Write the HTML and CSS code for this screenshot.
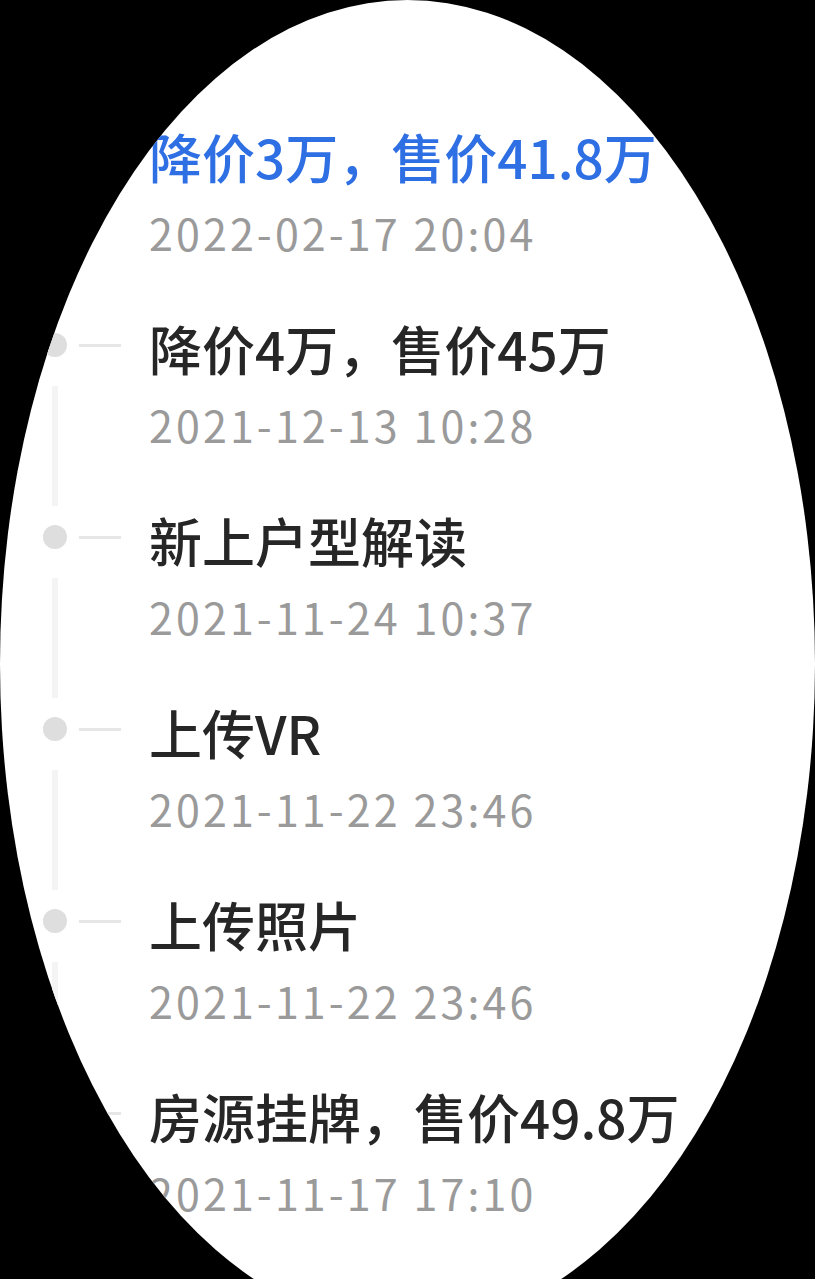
FILE: index.html
```html
<!DOCTYPE html>
<html lang="zh-CN">
<head>
<meta charset="utf-8">
<title>房源动态</title>
<link rel="stylesheet" href="styles.css">
</head>
<body>
<div class="screen">
  <ul class="timeline">
    <li class="item item-active">
      <div class="rail"><div class="head"><span class="dot"></span><span class="hline"></span></div><span class="vline"></span></div>
      <div class="content"><div class="title">降价3万，售价41.8万</div><div class="date">2022-02-17 20:04</div></div>
    </li>
    <li class="item">
      <div class="rail"><div class="head"><span class="dot"></span><span class="hline"></span></div><span class="vline"></span></div>
      <div class="content"><div class="title">降价4万，售价45万</div><div class="date">2021-12-13 10:28</div></div>
    </li>
    <li class="item">
      <div class="rail"><div class="head"><span class="dot"></span><span class="hline"></span></div><span class="vline"></span></div>
      <div class="content"><div class="title">新上户型解读</div><div class="date">2021-11-24 10:37</div></div>
    </li>
    <li class="item">
      <div class="rail"><div class="head"><span class="dot"></span><span class="hline"></span></div><span class="vline"></span></div>
      <div class="content"><div class="title">上传VR</div><div class="date">2021-11-22 23:46</div></div>
    </li>
    <li class="item">
      <div class="rail"><div class="head"><span class="dot"></span><span class="hline"></span></div><span class="vline"></span></div>
      <div class="content"><div class="title">上传照片</div><div class="date">2021-11-22 23:46</div></div>
    </li>
    <li class="item">
      <div class="rail"><div class="head"><span class="dot"></span><span class="hline"></span></div><span class="vline"></span></div>
      <div class="content"><div class="title">房源挂牌，售价49.8万</div><div class="date">2021-11-17 17:10</div></div>
    </li>
  </ul>
</div>
</body>
</html>
```

FILE: styles.css
```css
html, body {
  margin: 0;
  padding: 0;
  background: #000;
  height: 1279px;
  overflow: hidden;
}

.screen {
  width: 815px;
  height: 1328px;
  border-radius: 50%;
  background: #fff;
  overflow: hidden;
}

.timeline {
  list-style: none;
  margin: 0;
  padding: 123px 0 0 0;
}

.item {
  display: flex;
  height: 192px;
}

.rail {
  width: 149px;
  flex: none;
  display: flex;
  flex-direction: column;
}

.head {
  height: 60px;
  display: flex;
  align-items: center;
  padding-left: 43px;
}

.dot {
  width: 24px;
  height: 24px;
  border-radius: 50%;
  background: #dedede;
}

.hline {
  width: 42px;
  height: 3px;
  margin-left: 12px;
  background: #e6e6e6;
}

.vline {
  width: 6px;
  height: 120px;
  margin-top: 11px;
  margin-left: 52px;
  background: #f4f4f4;
}

.content {
  display: flex;
  flex-direction: column;
}

.title {
  font-family: "Noto Sans CJK SC", "Noto Sans", sans-serif;
  font-size: 53px;
  font-weight: 500;
  line-height: 66px;
  color: #262626;
  white-space: nowrap;
}

.item-active .title {
  color: #2f6fe4;
}

.date {
  font-family: "Noto Sans CJK SC", "Noto Sans", sans-serif;
  font-size: 43px;
  font-weight: 400;
  line-height: 86px;
  letter-spacing: 3.1px;
  color: #9a9a9a;
  white-space: nowrap;
}
```
